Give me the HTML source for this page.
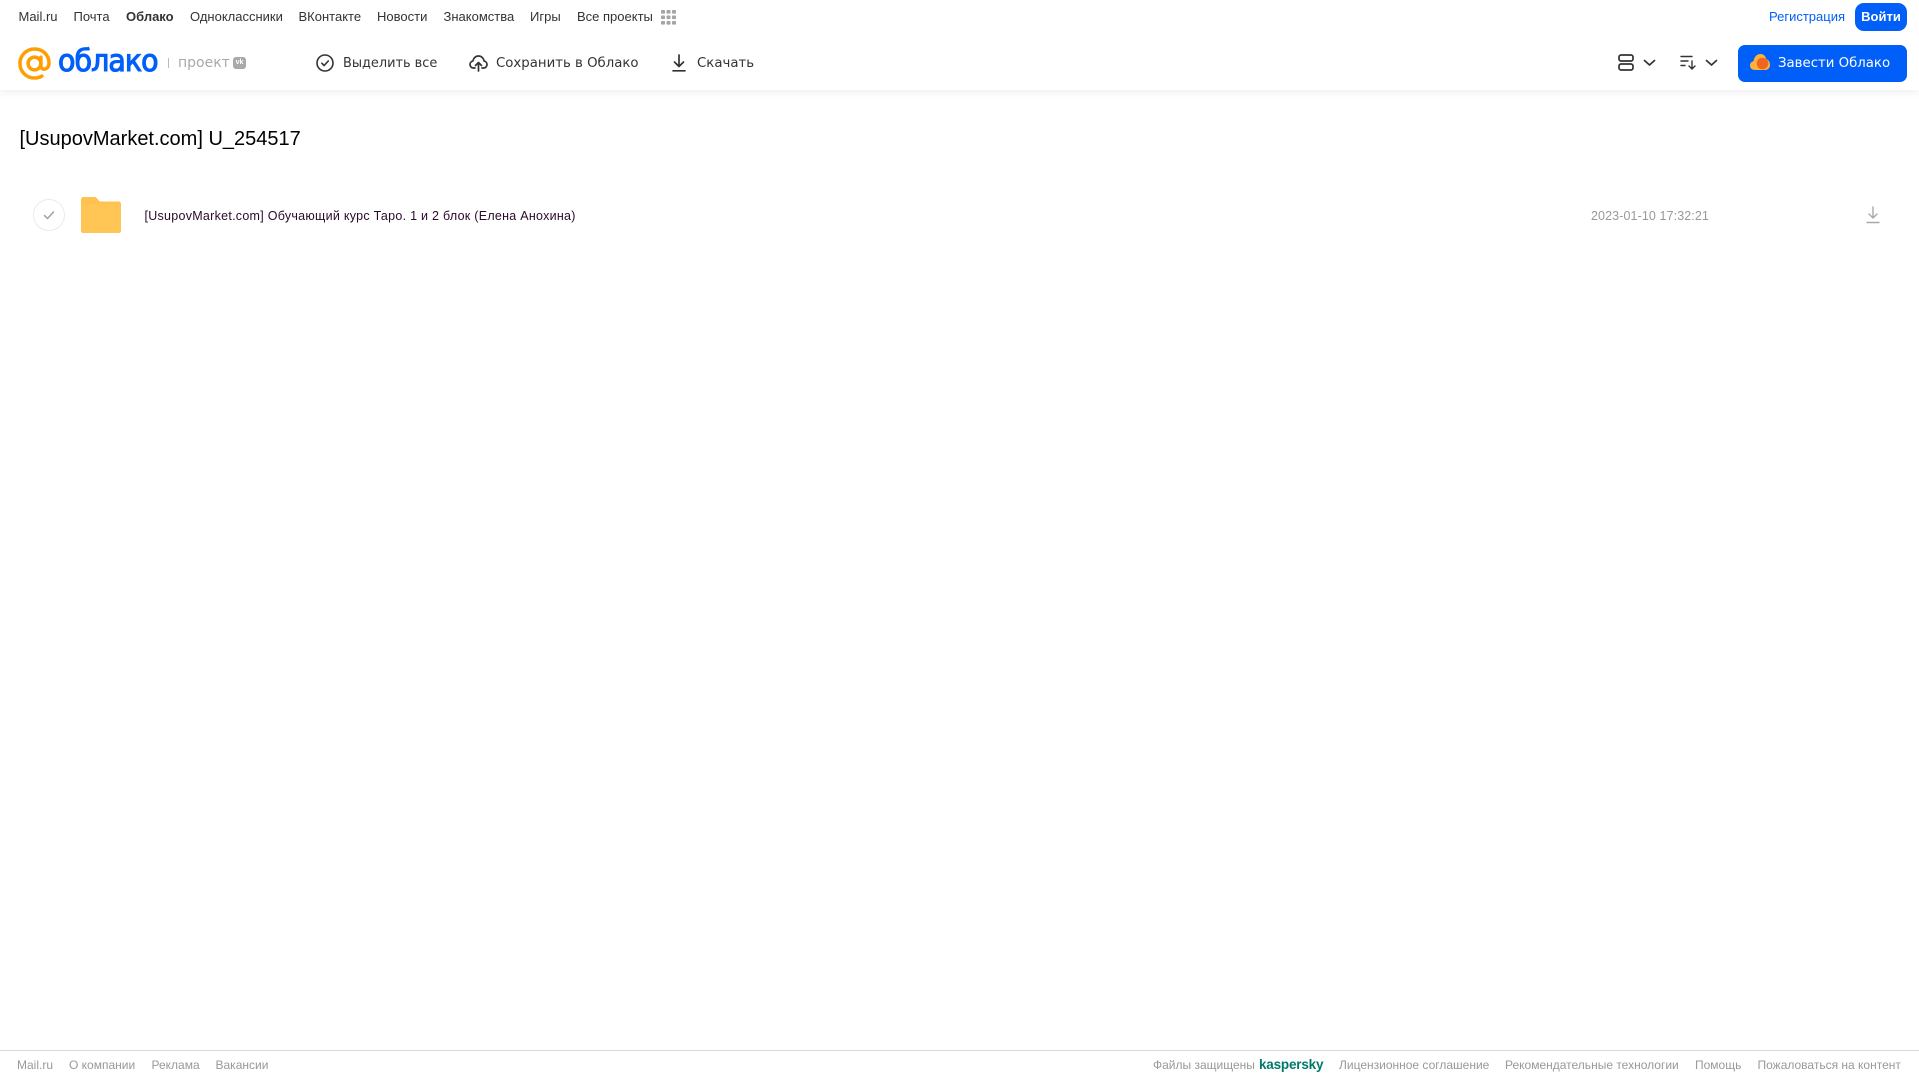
<!DOCTYPE html>
<html lang="ru">
<head>
<meta charset="utf-8">
<title>Облако</title>
<style>
html,body{margin:0;padding:0;background:#fff}
body{width:1919px;height:1079px;position:relative;overflow:hidden;font-family:"Liberation Sans",Arial,sans-serif}
.t{position:absolute;white-space:nowrap;line-height:16px}
.n{top:9px;font-size:13px;color:#333}
.tb{top:56px;color:#333;font-family:"DejaVu Sans","Liberation Sans",sans-serif;font-size:13.3px;letter-spacing:0}
.f{top:1057px;font-size:12px;color:#999}
svg{position:absolute;display:block}
</style>
</head>
<body>
<div style="position:absolute;left:0;top:0;width:1919px;height:90px;background:#fff;box-shadow:0 2px 8px rgba(0,0,0,.07)"></div>

<span class="t n" style="left:18.5px">Mail.ru</span>
<span class="t n" style="left:73.5px">Почта</span>
<span class="t n" style="left:126px;font-weight:bold">Облако</span>
<span class="t n" style="left:190px">Одноклассники</span>
<span class="t n" style="left:298.5px">ВКонтакте</span>
<span class="t n" style="left:377px">Новости</span>
<span class="t n" style="left:443.5px">Знакомства</span>
<span class="t n" style="left:530px">Игры</span>
<span class="t n" style="left:577px">Все проекты</span>
<svg style="left:661px;top:10px" width="15" height="15" viewBox="0 0 15 15" fill="#a5a5a5">
<rect x="0" y="0" width="4" height="3.6" rx=".8"/><rect x="5.5" y="0" width="4" height="3.6" rx=".8"/><rect x="11" y="0" width="4" height="3.6" rx=".8"/>
<rect x="0" y="5.5" width="4" height="3.6" rx=".8"/><rect x="5.5" y="5.5" width="4" height="3.6" rx=".8"/><rect x="11" y="5.5" width="4" height="3.6" rx=".8"/>
<rect x="0" y="11" width="4" height="3.6" rx=".8"/><rect x="5.5" y="11" width="4" height="3.6" rx=".8"/><rect x="11" y="11" width="4" height="3.6" rx=".8"/>
</svg>

<span class="t" style="left:1769px;top:9px;font-size:13px;color:#005ff9">Регистрация</span>
<div class="t" style="left:1855px;top:3px;width:52px;height:28px;line-height:28px;border-radius:9px;background:#005ff9;color:#fff;font-size:13px;font-weight:bold;text-align:center">Войти</div>

<!-- logo -->
<svg style="left:18px;top:47px" width="33" height="33" viewBox="0 0 34 34" fill="none" stroke="#ff9e00" stroke-width="3.6">
<circle cx="17" cy="17" r="6.6"/>
<path d="M23.6 10.6V19.5c0 5 7.900 4.600 8.300-2.500C32.300 8.400 25.500 2 17 2 8.700 2 2 8.700 2 17s6.700 15 15 15c3 0 5.400-.7 7.600-2" stroke-linecap="round"/>
</svg>
<span class="t" style="left:57.5px;top:44px;line-height:36px;font-size:30px;color:#005ff9;-webkit-text-stroke:1.1px #005ff9;font-family:'DejaVu Sans','Liberation Sans',sans-serif;letter-spacing:-1px;transform-origin:left center;transform:scale(.95,1)">облако</span>
<div style="position:absolute;left:168px;top:58px;width:1px;height:10px;background:#bbb"></div>
<span class="t" style="left:178px;top:55px;font-size:14px;color:#a9a9a9;font-family:'DejaVu Sans','Liberation Sans',sans-serif">проект</span>
<div style="position:absolute;left:233px;top:57px;width:13px;height:12px;background:#a9a9a9;border-radius:3px;color:#fff;font-size:7px;font-weight:bold;line-height:12px;text-align:center">vk</div>

<!-- toolbar -->
<svg style="left:316px;top:54px" width="18" height="18" viewBox="0 0 18 18" fill="none" stroke="#333" stroke-width="1.6" stroke-linecap="round" stroke-linejoin="round">
<circle cx="9" cy="9" r="8"/><path d="M5.800 9.200l2.300 2.300 4.200-4.500"/>
</svg>
<span class="t tb" style="left:343px;font-size:12.9px">Выделить все</span>
<svg style="left:469px;top:54px" width="19" height="18" viewBox="0 0 19 18" fill="none" stroke="#333" stroke-width="1.7" stroke-linecap="round" stroke-linejoin="round">
<path d="M6 14H4.500C2.500 14 1 12.500 1 10.500 1 8.800 2.200 7.400 3.800 7.100 4.300 4.200 6.600 2 9.500 2c2.900 0 5.200 2.200 5.700 5.100C16.800 7.400 18 8.800 18 10.500 18 12.500 16.500 14 14.500 14H13"/>
<path d="M9.500 17V8.500M6.500 11.500l3-3 3 3"/>
</svg>
<span class="t tb" style="left:496px">Сохранить в Облако</span>
<svg style="left:671px;top:54px" width="16" height="18" viewBox="0 0 16 18" fill="none" stroke="#333" stroke-width="1.7" stroke-linecap="round" stroke-linejoin="round">
<path d="M8 1v11M3.500 8L8 12.500 12.500 8M2 16.800h12"/>
</svg>
<span class="t tb" style="left:697px">Скачать</span>

<!-- right controls -->
<svg style="left:1618px;top:54px" width="16" height="17" viewBox="0 0 16 17" fill="none" stroke="#333" stroke-width="1.7">
<rect x="1" y="1" width="14" height="6" rx="2"/><rect x="1" y="10" width="14" height="6" rx="2"/>
</svg>
<svg style="left:1643px;top:59px" width="13" height="8" viewBox="0 0 13 8" fill="none" stroke="#333" stroke-width="1.7" stroke-linecap="round" stroke-linejoin="round"><path d="M1.500 1.500l5 4.500 5-4.500"/></svg>
<svg style="left:1680px;top:55px" width="17" height="15" viewBox="0 0 17 15" fill="none" stroke="#333" stroke-width="1.4" stroke-linecap="round" stroke-linejoin="round">
<path d="M1 1.500h11M1 6h7M1 10.500h4M12 6v8M9 11l3 3 3-3"/>
</svg>
<svg style="left:1705px;top:59px" width="13" height="8" viewBox="0 0 13 8" fill="none" stroke="#333" stroke-width="1.7" stroke-linecap="round" stroke-linejoin="round"><path d="M1.500 1.500l5 4.500 5-4.500"/></svg>

<div style="position:absolute;left:1738px;top:45px;width:169px;height:37px;background:#005ff9;border-radius:7px"></div>
<svg style="left:1750px;top:54px" width="20" height="17" viewBox="0 0 20 17">
<path d="M5 16C2 16 0 14 0 11.500 0 9.300 1.500 7.700 3.500 7.300 4 3 7 0 10.500 0 13.500 0 15.500 2 16.200 5 18.500 5.800 20 8 20 11c0 3-2.200 5-5 5z" fill="#ffb13d"/>
<circle cx="12.500" cy="9.500" r="5.800" fill="#f0661f"/>
</svg>
<span class="t tb" style="left:1778px;color:#fff">Завести Облако</span>

<!-- title -->
<div class="t" style="left:19.500px;top:125px;line-height:28px;font-size:20px;color:#000">[UsupovMarket.com] U_254517</div>

<!-- row -->
<svg style="left:33px;top:199px" width="32" height="32" viewBox="0 0 32 32" fill="none">
<circle cx="16" cy="16" r="15.500" stroke="#ebebeb"/>
<path d="M11.500 16.500l3 3 6-6.500" stroke="#a0a0a0" stroke-width="1.500" stroke-linecap="round" stroke-linejoin="round"/>
</svg>
<svg style="left:81px;top:197px" width="40" height="36" viewBox="0 0 40 36">
<path d="M3 0h10c2 0 3 1 4 2.500C18 4 18.500 4.500 20 4.500h17.500c1.500 0 2.500 1 2.500 2.500v26.500c0 1.500-1 2.500-2.500 2.500H2.500C1 36 0 35 0 33.500V3C0 1 1 0 3 0z" fill="#ffc24e"/>
<path d="M0 10c0-1.500 1-2.500 2.500-2.500h35c1.500 0 2.500 1 2.500 2.500v23.500c0 1.500-1 2.500-2.500 2.500H2.500C1 36 0 35 0 33.500z" fill="#ffc555"/>
</svg>
<div class="t" style="left:144.500px;top:208px;font-size:12.500px;color:#2a0a2a;letter-spacing:.27px">[UsupovMarket.com] Обучающий курс Таро. 1 и 2 блок (Елена Анохина)</div>
<div class="t" style="left:1591px;top:208px;font-size:12.500px;color:#999;letter-spacing:.1px">2023-01-10 17:32:21</div>
<svg style="left:1866px;top:206px" width="14" height="18" viewBox="0 0 14 18" fill="none" stroke="#a8a8a8" stroke-width="1.400" stroke-linecap="round" stroke-linejoin="round">
<path d="M7 1v11M3 8l4 4 4-4M1 16.500h12"/>
</svg>

<!-- footer -->
<div style="position:absolute;left:0;top:1050px;width:1919px;height:1px;background:#d9d9d9"></div>
<span class="t f" style="left:17px">Mail.ru</span>
<span class="t f" style="left:69px">О компании</span>
<span class="t f" style="left:151.500px">Реклама</span>
<span class="t f" style="left:215.500px">Вакансии</span>
<span class="t f" style="left:1153px">Файлы защищены</span>
<span class="t f" style="left:1259px;top:1057px;font-size:13.500px;font-weight:bold;color:#00796b;letter-spacing:-.2px">kaspersky</span>
<span class="t f" style="left:1339px">Лицензионное соглашение</span>
<span class="t f" style="left:1505px">Рекомендательные технологии</span>
<span class="t f" style="left:1695px">Помощь</span>
<span class="t f" style="left:1757.500px">Пожаловаться на контент</span>
</body>
</html>
